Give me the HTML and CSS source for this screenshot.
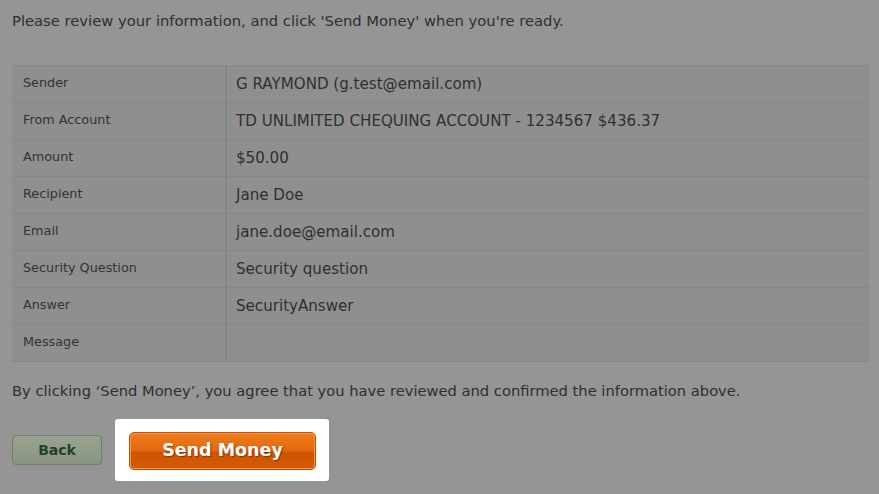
FILE: index.html
```html
<!DOCTYPE html>
<html lang="en">
  <head>
    <meta charset="UTF-8" />
    <meta name="viewport" content="width=device-width, initial-scale=1.0" />
    <title>Review Transfer</title>
    <link rel="stylesheet" href="styles.css">
  </head>
  <body>
    <p class="intro">Please review your information, and click 'Send Money' when you're ready.</p>

    <!-- Transfer summary -->
    <table class="review">
      <tr><th>Sender</th><td>G RAYMOND (g.test@email.com)</td></tr>
      <tr><th>From Account</th><td>TD UNLIMITED CHEQUING ACCOUNT - 1234567 $436.37</td></tr>
      <tr><th>Amount</th><td>$50.00</td></tr>
      <tr><th>Recipient</th><td>Jane Doe</td></tr>
      <tr><th>Email</th><td>jane.doe@email.com</td></tr>
      <tr><th>Security Question</th><td>Security question</td></tr>
      <tr><th>Answer</th><td>SecurityAnswer</td></tr>
      <tr><th>Message</th><td></td></tr>
    </table>

    <p class="agree">By clicking ‘Send Money’, you agree that you have reviewed and confirmed the information above.</p>

    <div class="actions">
      <button type="button" class="btn-back">Back</button>
      <div class="spotlight">
        <button type="submit" class="btn-send">Send Money</button>
      </div>
    </div>
  </body>
</html>
```

FILE: styles.css
```css
body {
  margin: 0;
  padding: 0 10px 0 12px;
  background-color: #959595;
  font-family: "DejaVu Sans", Verdana, sans-serif;
  color: #2f2f2f;
}
.intro {
  margin: 12px 0 0;
  font-size: 14.75px;
  line-height: 18px;
}
.review {
  width: 100%;
  margin-top: 35px;
  border-collapse: collapse;
  background-color: #8f8f8f;
  border-top: 1px solid #8a8a8a;
}
.review tr {
  height: 37px;
  border-bottom: 1px solid #868686;
}
.review th {
  width: 202px;
  padding: 9px 0 0 11px;
  text-align: left;
  font-weight: normal;
  font-size: 12.8px;
  color: #333;
  border-right: 2px solid #7f8a86;
  vertical-align: top;
}
.review td {
  padding: 9px 0 0 9px;
  font-size: 15.1px;
  color: #2f2f2f;
  vertical-align: top;
}
.agree {
  margin: 20px 0 0;
  font-size: 14.7px;
  line-height: 18px;
}
.actions {
  display: flex;
  align-items: center;
  margin-top: 19px;
}
.btn-back {
  width: 90px;
  height: 30px;
  padding: 0;
  font-family: inherit;
  font-size: 14px;
  font-weight: bold;
  color: #23402a;
  background: linear-gradient(#97a38f, #8a9683);
  border: 1px solid #6e7d6c;
  border-radius: 4px;
}
.spotlight {
  margin-left: 13px;
  padding: 13px 13px 11px 14px;
  background-color: #fff;
  border-radius: 3px;
}
.btn-send {
  display: block;
  width: 187px;
  height: 38px;
  padding: 0 0 3px;
  font-family: inherit;
  font-size: 17.5px;
  font-weight: bold;
  color: #fff;
  text-shadow: 1px 1px 1px #8a3500;
  background: linear-gradient(#ee7d20 0%, #e2680c 50%, #cd5300 53%, #d55b05 100%);
  border: 1px solid #c94d00;
  border-radius: 5px;
  box-shadow: inset 0 0 0 1px #f39a4a;
  cursor: pointer;
}
```
